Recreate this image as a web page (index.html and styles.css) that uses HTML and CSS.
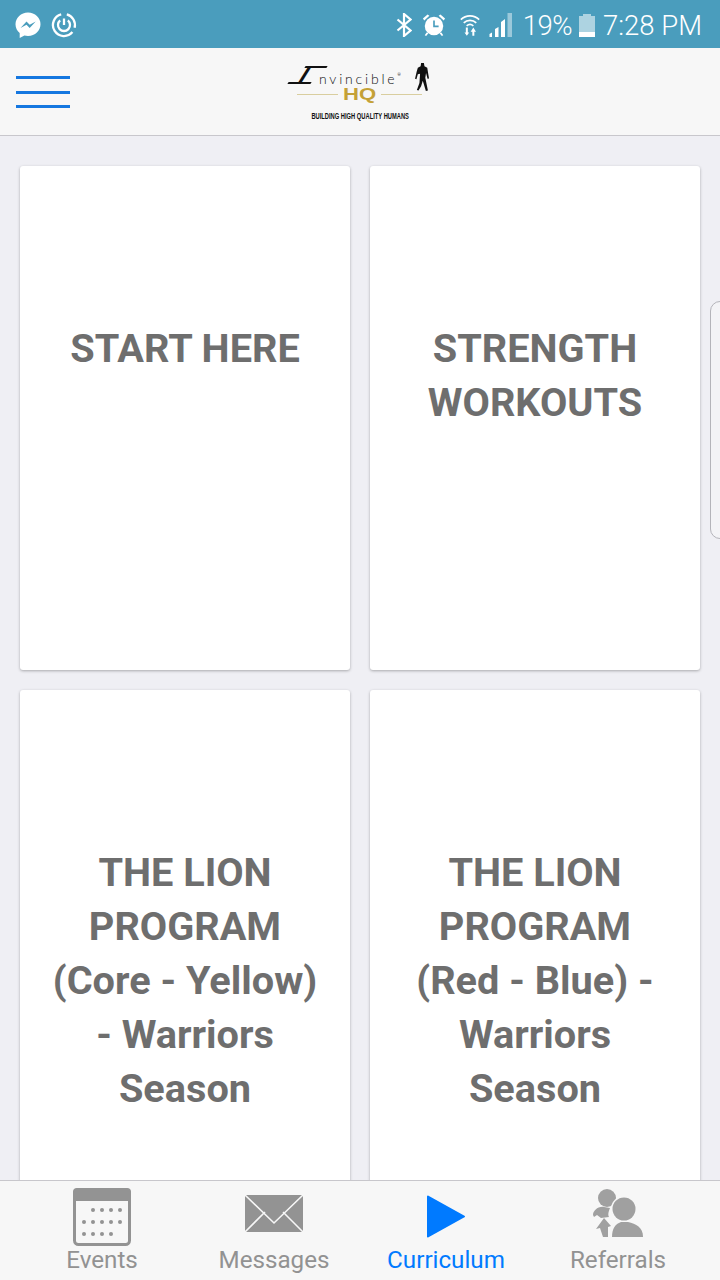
FILE: index.html
```html
<!DOCTYPE html>
<html lang="en">
<head>
<meta charset="utf-8">
<title>Invincible HQ</title>
<link rel="stylesheet" href="styles.css">
</head>
<body>
<div class="app">
  <div class="status">
    <div class="status-left">
      <svg class="s-msg" viewBox="0 0 26 26"><path fill="#fff" d="M13 0.500C6 0.500 .5 5.700 .5 12.200c0 3.500 1.600 6.600 4.200 8.800v5l4.700-2.600c1.100.3 2.300.5 3.600.5 7 0 12.500-5.200 12.500-11.700S20 .5 13 .5z"/><path fill="#4a9dbd" d="M5.500 16l6-6.500 3.200 3.200 6-3.200-6 6.500-3.200-3.200z"/></svg>
      <svg class="s-pow" viewBox="0 0 26 26" fill="none" stroke="#fff" stroke-width="2.300"><path d="M15.800 2.400A11 11 0 0 1 23.600 15.800"/><path d="M21.400 20.100A11 11 0 1 1 10.200 2.400"/><path d="M9.140 8.400A6 6 0 1 0 16.860 8.400"/><path d="M13 6.500v6.500"/></svg>
    </div>
    <div class="status-right">
      <svg class="s-bt" viewBox="0 0 16 24" fill="none" stroke="#fff" stroke-width="2.200"><path d="M1.500 6.500l13 11-6.500 5.500V1l6.500 5.500-13 11"/></svg>
      <svg class="s-alarm" viewBox="0 0 26 26"><circle cx="13" cy="14" r="10" fill="#fff"/><path fill="#fff" d="M1 6l5-4.500 2 1.500-5.500 5zM25 6l-5-4.500-2 1.500 5.500 5zM5 21l-2 3 1.500 1 2.500-3zM21 21l2 3-1.500 1-2.500-3z"/><path fill="none" stroke="#4a9dbd" stroke-width="1.800" d="M13 8v6.500h5"/></svg>
      <svg class="s-wifi" viewBox="0 0 24 28" fill="none" stroke="#fff" stroke-width="2"><path d="M1 7.500c6-6 16-6 22 0M4.500 11.500c4-4 11-4 15 0M8 15c2.500-2.200 5.500-2.200 8 0"/><path fill="#fff" stroke="none" d="M7 17h2.400v6H11l-2.800 4-2.800-4H7zM16 17l3.200 5h-2v5h-2.400v-5h-2z"/></svg>
      <svg class="s-sig" viewBox="0 0 23 24"><path fill="#fff" fill-opacity=".45" d="M18.500 0H23v24h-4.500z"/><path fill="#fff" d="M0.500 21l2.500-1.500V24H.5zM6 16l3.500-2v10H6zM12 9l4-3v18h-4z"/></svg>
      <span class="s-pct">19%</span>
      <span class="s-bat"><span class="s-bat-nub"></span><span class="s-bat-body"><span class="s-bat-fill"></span></span></span>
      <span class="s-time">7:28 PM</span>
    </div>
  </div>

  <header class="topbar">
    <button class="menu" aria-label="Menu"><span></span><span></span><span></span></button>
    <div class="logo">
      <div class="logo-main">
        <span class="logo-i">I</span><span class="logo-word">nvincible</span><sup class="logo-tm">®</sup>
        <svg class="logo-man" viewBox="0 0 16 30"><path fill="#111" d="M6.500 0h3l.6 3.500 3 1.500 1.200 7.500.7 4-1.600.3-1.600-6-.8 5 2.800 13.700-2.200.5-3.300-11-1.800 6-2.800 4.500-1.700-.6 2.700-7.500.7-10L3 12 1.500 17.500 0 17l1.800-8L3 5l3-1.500z"/></svg>
      </div>
      <div class="logo-mid"><i></i><span>HQ</span><i></i></div>
      <div class="logo-tag">BUILDING HIGH QUALITY HUMANS</div>
    </div>
  </header>

  <main class="content">
    <div class="grid">
      <article class="card">START HERE</article>
      <article class="card">STRENGTH WORKOUTS</article>
      <article class="card">THE LION PROGRAM (Core - Yellow) - Warriors Season</article>
      <article class="card">THE LION PROGRAM (Red - Blue) - Warriors Season</article>
    </div>
    <div class="edge-handle"></div>
  </main>

  <nav class="tabs">
    <div class="tab tab-events">
      <svg class="ico" width="60" height="60" viewBox="0 0 60 60">
        <rect x="2.500" y="2.500" width="55" height="55" rx="4" fill="none" stroke="#939393" stroke-width="3"/>
        <path fill="#939393" d="M5 1h50a4 4 0 0 1 4 4v9H1V5a4 4 0 0 1 4-4z"/>
        <g fill="#939393"><circle cx="21" cy="23" r="2"/><circle cx="30" cy="23" r="2"/><circle cx="39" cy="23" r="2"/><circle cx="48" cy="23" r="2"/><circle cx="12" cy="35" r="2"/><circle cx="21" cy="35" r="2"/><circle cx="30" cy="35" r="2"/><circle cx="39" cy="35" r="2"/><circle cx="48" cy="35" r="2"/><circle cx="12" cy="47" r="2"/><circle cx="21" cy="47" r="2"/><circle cx="30" cy="47" r="2"/><circle cx="39" cy="47" r="2"/></g>
      </svg>
      <span>Events</span>
    </div>
    <div class="tab tab-messages">
      <svg class="ico" width="60" height="60" viewBox="0 0 60 60">
        <rect x="1" y="8" width="58" height="37" fill="#939393"/>
        <path fill="none" stroke="#f7f7f7" stroke-width="1.600" d="M1 8l29 28L59 8M1 45l20-20M59 45L39 25"/>
      </svg>
      <span>Messages</span>
    </div>
    <div class="tab tab-active">
      <svg class="ico" width="60" height="60" viewBox="0 0 60 60">
        <path fill="#007aff" stroke="#007aff" stroke-width="2" stroke-linejoin="round" d="M12 9.500l36 20-36 20z"/>
      </svg>
      <span>Curriculum</span>
    </div>
    <div class="tab tab-referrals">
      <svg class="ico" width="60" height="60" viewBox="0 0 60 60">
        <g fill="#a0a0a0">
          <circle cx="19" cy="11" r="9"/>
          <path d="M5 28c0-4 5-9 11-8l6 1c-2 5-2 7-1 9l-8 1-4-3-3 2z"/>
          <path d="M16 31l7 8-3 1v10h-5l-3-9-4 1z"/>
          <circle cx="36" cy="22" r="13" fill="#f7f7f7"/>
          <circle cx="36" cy="22" r="11.500"/>
          <path d="M24 50c0-8 3-13 9-15h7c8 2 15 5 15 15z"/>
        </g>
      </svg>
      <span>Referrals</span>
    </div>
  </nav>
</div>
</body>
</html>
```

FILE: styles.css
```css
* { box-sizing: border-box; }
html, body { margin: 0; padding: 0; }
body { font-family: Roboto, "Liberation Sans", sans-serif; background: #efeff4; }

.app { width: 720px; height: 1280px; display: flex; flex-direction: column; overflow: hidden; }

/* status bar */
.status { height: 48px; flex: none; background: #4a9dbd; display: flex; justify-content: space-between; align-items: center; color: #fff; padding: 2px 18px 0 15px; }
.status-left, .status-right { display: flex; align-items: center; }
.s-msg { width: 26px; height: 26px; }
.s-pow { width: 26px; height: 26px; margin-left: 10px; }
.s-bt { width: 16px; height: 24px; }
.s-alarm { width: 24px; height: 24px; margin-left: 10px; }
.s-wifi { width: 20px; height: 24px; margin-left: 14px; }
.s-sig { width: 23px; height: 24px; margin-left: 9px; }
.s-pct { font-size: 27.500px; font-weight: 300; margin-left: 11px; letter-spacing: -.5px; }
.s-bat { display: flex; flex-direction: column; align-items: center; margin-left: 7px; width: 16px; }
.s-bat-nub { width: 8px; height: 2px; background: rgba(255,255,255,.55); }
.s-bat-body { width: 16px; height: 21px; background: rgba(255,255,255,.55); display: flex; align-items: flex-end; }
.s-bat-fill { width: 100%; height: 5px; background: #fff; }
.s-time { font-size: 27.500px; font-weight: 300; margin-left: 8px; }

/* top bar */
.topbar { height: 88px; flex: none; background: #f7f7f7; border-bottom: 1px solid #c8c7cc; display: flex; align-items: center; justify-content: center; position: relative; }
.menu { position: absolute; left: 16px; top: 28px; width: 54px; height: 32px; padding: 0; border: 0; background: none; display: flex; flex-direction: column; justify-content: space-between; }
.menu span { display: block; height: 3px; width: 54px; background: #1577e0; }
.logo { width: 140px; display: flex; flex-direction: column; align-items: center; color: #111; }
.logo-main { height: 28px; width: 140px; display: flex; align-items: flex-end; position: relative; }
.logo-i { position: relative; display: block; width: 29px; height: 18px; margin-bottom: 7px; font-family: "Liberation Sans", sans-serif; font-weight: 700; font-size: 24px; line-height: 18px; text-align: center; flex: none; transform: skewX(-32deg); }
.logo-i::before { content: ""; position: absolute; left: 10px; top: 0; width: 22px; height: 1.500px; background: #111; }
.logo-i::after { content: ""; position: absolute; left: 3px; bottom: 0; width: 23px; height: 2.500px; background: #111; }
.logo-word { font-family: Lato, sans-serif; font-weight: 300; font-size: 14px; letter-spacing: 2.800px; line-height: 16px; margin-bottom: 4px; }
.logo-tm { font-size: 4px; line-height: 4px; margin-bottom: 14px; vertical-align: baseline; }
.logo-man { width: 15px; height: 28px; position: absolute; right: 0; top: 0; }
.logo-mid { display: flex; align-items: center; width: 125px; margin-top: -3px; margin-left: -1px; }
.logo-mid i { flex: 1; height: 1px; background: #d9ce9f; }
.logo-mid span { width: 43px; text-align: center; font-family: "Liberation Sans", sans-serif; font-weight: 700; font-size: 17px; line-height: 14px; color: #c4a137; transform: scaleX(1.300); }
.logo-tag { font-family: "Liberation Sans", sans-serif; font-weight: 700; font-size: 9px; line-height: 9px; margin-top: 10px; white-space: nowrap; transform: scaleX(.64); }

/* content */
.content { flex: 1; min-height: 0; overflow: hidden; position: relative; background: #efeff4; }
.grid { display: grid; grid-template-columns: 330px 330px; gap: 20px; padding: 30px 20px; }
.card { height: 504px; background: #fff; border-radius: 3px; box-shadow: 0 1px 3px rgba(0,0,0,.3); padding: 155.500px 30px 0; text-align: center; font-size: 39.700px; font-weight: 700; line-height: 54px; color: #6e6e6e; }
.edge-handle { position: absolute; left: 710px; top: 165px; width: 20px; height: 238px; border: 1px solid #b4b4ba; border-radius: 10px; background: #f3f3f6; }

/* tabs */
.tabs { height: 100px; flex: none; background: #f7f7f7; border-top: 1px solid #c8c7cc; display: flex; padding: 0 16px; }
.tab { width: 172px; display: flex; flex-direction: column; align-items: center; padding-top: 6px; font-size: 24.200px; line-height: 28px; color: #929292; }
.tab .ico { display: block; margin-bottom: -1px; flex: none; }
.tab-active { color: #007aff; }
```
